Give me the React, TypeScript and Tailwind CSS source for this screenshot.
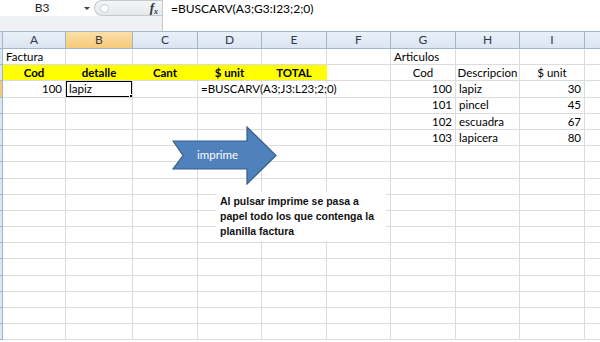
import * as React from 'react';

const cols = ['A', 'B', 'C', 'D', 'E', 'F', 'G', 'H', 'I', 'J'];

type Cell = { text?: string; align?: 'left' | 'right' | 'center'; bold?: boolean; yellow?: boolean; overflow?: boolean };

const data: Record<string, Cell> = {
  A1: { text: 'Factura' },
  A2: { text: 'Cod', align: 'center', bold: true, yellow: true },
  B2: { text: 'detalle', align: 'center', bold: true, yellow: true },
  C2: { text: 'Cant', align: 'center', bold: true, yellow: true },
  D2: { text: '$ unit', align: 'center', bold: true, yellow: true },
  E2: { text: 'TOTAL', align: 'center', bold: true, yellow: true },
  A3: { text: '100', align: 'right' },
  B3: { text: 'lapiz' },
  D3: { text: '=BUSCARV(A3;J3:L23;2;0)', overflow: true },
  G1: { text: 'Articulos' },
  G2: { text: 'Cod', align: 'center' },
  H2: { text: 'Descripcion', align: 'center' },
  I2: { text: '$ unit', align: 'center' },
  G3: { text: '100', align: 'right' },
  H3: { text: 'lapiz' },
  I3: { text: '30', align: 'right' },
  G4: { text: '101', align: 'right' },
  H4: { text: 'pincel' },
  I4: { text: '45', align: 'right' },
  G5: { text: '102', align: 'right' },
  H5: { text: 'escuadra' },
  I5: { text: '67', align: 'right' },
  G6: { text: '103', align: 'right' },
  H6: { text: 'lapicera' },
  I6: { text: '80', align: 'right' },
};

const rows = Array.from({ length: 18 }, (_, i) => i + 1);

function SheetCell({ id }: { id: string }) {
  const c = data[id];
  const selected = id === 'B3';
  const align =
    c?.align === 'right' ? 'justify-end' : c?.align === 'center' ? 'justify-center' : 'justify-start';
  return (
    <div
      className={`relative flex items-center px-[3px] border-r border-b border-[#dadcdd] ${
        c?.yellow ? 'bg-[#ffff00] border-r-[#ffff00]' : 'bg-white'
      } ${align} ${c?.overflow ? 'overflow-visible z-10' : 'overflow-hidden'}`}
    >
      {c?.text && (
        <span className={`whitespace-nowrap leading-none ${c.bold ? 'font-bold' : ''} ${c.overflow ? 'bg-white' : ''}`}>
          {c.text}
        </span>
      )}
      {selected && (
        <div className="absolute -left-[1px] -top-[1px] right-[-1px] bottom-[-1px] border-2 border-black">
          <div className="absolute -right-[3px] -bottom-[3px] w-[5px] h-[5px] bg-black border border-white" />
        </div>
      )}
    </div>
  );
}

export default function App() {
  return (
    <div className="w-[600px] h-[342px] overflow-hidden bg-white text-[11.5px] text-black" style={{ fontFamily: 'Lato, "Liberation Sans", sans-serif' }}>
      {/* formula bar */}
      <div className="flex h-[32px] border-b border-[#a5b6ca]">
        <div className="flex flex-col w-[162px]">
          <div className="flex h-[16px] items-center">
            <div className="w-[84px] text-center text-[12px] text-[#222]">B3</div>
            <div className="w-0 h-0 border-l-[3px] border-r-[3px] border-t-[3px] border-l-transparent border-r-transparent border-t-[#444]" />
            <div className="ml-[4px] flex-1 h-[16px] flex items-center rounded-l-full border border-[#c4c9d1] border-r-0 bg-gradient-to-b from-[#f4f5f7] to-[#e6e8ec]">
              <div className="ml-[5px] w-[9px] h-[9px] rounded-full border border-[#c9ccd2] bg-white" />
              <div className="flex-1" />
              <span className="mr-[4px] italic font-bold text-[13px] text-[#333]" style={{ fontFamily: '"Liberation Serif", serif' }}>
                f<sub className="text-[8px]">x</sub>
              </span>
            </div>
          </div>
          <div className="flex-1 bg-[#eef0f4]" />
        </div>
        <div className="flex-1 border-l border-[#c4c9d1] pl-[8px] pt-[1px] text-[12px] leading-[15px]">=BUSCARV(A3;G3:I23;2;0)</div>
      </div>

      {/* sheet */}
      <div className="relative">
        <div className="grid grid-cols-[3px_63px_67px_65px_64px_65px_64px_65px_64px_65px_65px] grid-rows-[17px_repeat(18,16.2px)]">
          <div className="bg-[#dfe6f1] border-r border-b border-[#9eb6ce]" />
          {cols.map((c) => (
            <div
              key={c}
              className={`flex items-center justify-center border-r border-b border-[#9eb6ce] text-[12px] ${
                c === 'B' ? 'bg-gradient-to-b from-[#fbe0a8] to-[#f6c978] text-[#3a3a3a]' : 'bg-gradient-to-b from-[#eaf0f8] to-[#dbe5f2] text-[#2f3a4c]'
              }`}
            >
              {c === 'J' ? '' : c}
            </div>
          ))}
          {rows.map((r) => (
            <React.Fragment key={r}>
              <div className={`border-r border-b border-[#9eb6ce] ${r === 3 ? 'bg-[#f6c978]' : 'bg-[#dfe6f1]'}`} />
              {cols.map((c) => (
                <SheetCell key={c + r} id={c + r} />
              ))}
            </React.Fragment>
          ))}
        </div>

        {/* arrow shape */}
        <div className="absolute left-[172px] top-[94px] w-[106px] h-[59px] z-20">
          <svg width="106" height="59" viewBox="0 0 106 59" className="absolute inset-0">
            <polygon points="1,15 75,15 75,1 104,29.5 75,58 75,43 1,43 11,29.5" fill="#4f81bd" stroke="#385d8a" strokeWidth="1.2" />
          </svg>
          <span className="absolute left-[25px] top-[22px] text-white text-[11.5px] leading-[14px]">imprime</span>
        </div>

        {/* text box */}
        <div
          className="absolute left-[216px] top-[160px] w-[170px] bg-white px-[4px] py-[2px] z-20 text-[10.5px] leading-[15px] font-bold text-[#111]"
          style={{ fontFamily: '"Liberation Sans", Arial, sans-serif' }}
        >
          <div className="whitespace-nowrap">Al pulsar imprime se pasa a</div>
          <div className="whitespace-nowrap">papel todo los que contenga la</div>
          <div className="whitespace-nowrap">planilla factura</div>
        </div>
      </div>
    </div>
  );
}
